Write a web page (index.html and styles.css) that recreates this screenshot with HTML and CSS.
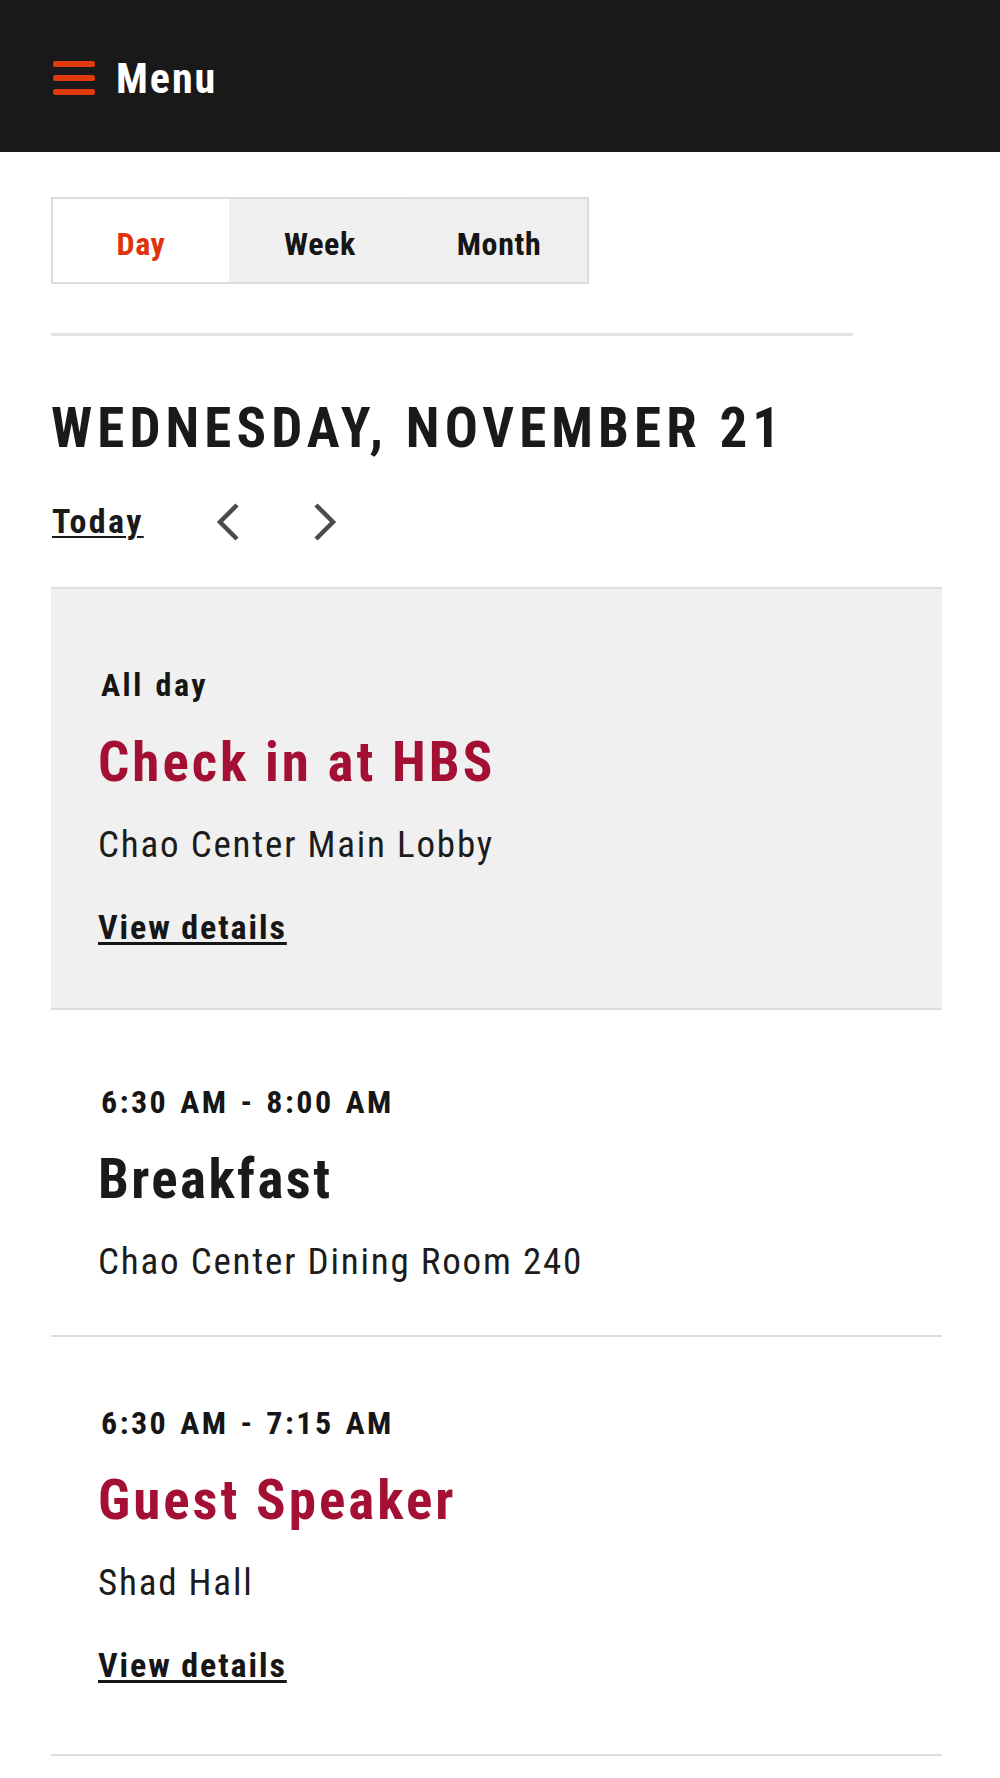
FILE: index.html
```html
<!DOCTYPE html>
<html lang="en">
<head>
<meta charset="utf-8">
<title>Calendar - Day</title>
<link rel="stylesheet" href="styles.css">
</head>
<body>
<header class="topbar">
  <a class="menu-btn" href="#">
    <svg class="menu-icon" width="42" height="34" viewBox="0 0 42 34" aria-hidden="true">
      <rect x="0" y="0" width="42" height="6" rx="2.5" fill="#e03a0e"/>
      <rect x="0" y="14" width="42" height="6" rx="2.5" fill="#e03a0e"/>
      <rect x="0" y="28" width="42" height="6" rx="2.5" fill="#e03a0e"/>
    </svg>
    <span class="menu-label">Menu</span>
  </a>
</header>

<main class="page">
  <nav class="view-tabs">
    <a class="tab tab-active" href="#">Day</a>
    <a class="tab" href="#">Week</a>
    <a class="tab tab-month" href="#">Month</a>
  </nav>

  <hr class="rule">

  <h1 class="day-title">WEDNESDAY, NOVEMBER 21</h1>

  <div class="day-nav">
    <a class="today-link" href="#">Today</a>
    <a class="arrow arrow-prev" href="#" aria-label="Previous day">
      <svg width="24" height="38" viewBox="0 0 24 38"><polyline points="21,2 4,19 21,36" fill="none" stroke="#4a4a4a" stroke-width="4.5"/></svg>
    </a>
    <a class="arrow arrow-next" href="#" aria-label="Next day">
      <svg width="24" height="38" viewBox="0 0 24 38"><polyline points="3,2 20,19 3,36" fill="none" stroke="#4a4a4a" stroke-width="4.5"/></svg>
    </a>
  </div>

  <ul class="events">
    <li class="event event-featured">
      <div class="event-time">All day</div>
      <h2 class="event-title title-link">Check in at HBS</h2>
      <div class="event-location">Chao Center Main Lobby</div>
      <a class="event-details" href="#">View details</a>
    </li>
    <li class="event">
      <div class="event-time">6:30 AM - 8:00 AM</div>
      <h2 class="event-title">Breakfast</h2>
      <div class="event-location">Chao Center Dining Room 240</div>
    </li>
    <li class="event event-last">
      <div class="event-time">6:30 AM - 7:15 AM</div>
      <h2 class="event-title title-link">Guest Speaker</h2>
      <div class="event-location">Shad Hall</div>
      <a class="event-details" href="#">View details</a>
    </li>
  </ul>
</main>
</body>
</html>
```

FILE: styles.css
```css
* {
  box-sizing: border-box;
}

body {
  margin: 0;
  background: #ffffff;
  color: #1a1a1a;
  font-family: "Roboto Condensed", "Liberation Sans", sans-serif;
}

a {
  color: inherit;
  text-decoration: none;
}

.topbar {
  height: 152px;
  background: #191919;
  display: flex;
  align-items: flex-start;
  padding: 58px 0 0 53px;
}

.menu-btn {
  display: flex;
  align-items: flex-start;
  color: #ffffff;
}

.menu-icon {
  display: block;
  margin-top: 3px;
}

.menu-label {
  margin-left: 21px;
  font-size: 42px;
  line-height: 42px;
  font-weight: 700;
  letter-spacing: 2px;
}

.page {
  margin-left: 51px;
  width: 891px;
}

.view-tabs {
  margin-top: 45px;
  width: 538px;
  height: 87px;
  border: 2px solid #dcdcdc;
  display: grid;
  grid-template-columns: 176px 182px 1fr;
}

.tab {
  display: flex;
  align-items: center;
  justify-content: center;
  padding-top: 6px;
  background: #f0f0f0;
  font-size: 32px;
  line-height: 32px;
  font-weight: 700;
  letter-spacing: 0.6px;
  color: #161616;
}

.tab-active {
  background: #ffffff;
  color: #e0330c;
}

.tab-month {
  background: #efefef;
}

.rule {
  margin: 49px 0 0 0;
  width: 802px;
  height: 3px;
  border: 0;
  background: #e3e3e3;
}

.day-title {
  margin: 65px 0 0 0;
  font-size: 55px;
  line-height: 55px;
  font-weight: 700;
  letter-spacing: 5.1px;
  color: #1a1a1a;
}

.day-nav {
  margin-top: 46px;
  height: 40px;
  display: flex;
  align-items: flex-start;
}

.today-link {
  margin: 2px 0 0 1px;
  font-size: 34px;
  line-height: 34px;
  font-weight: 700;
  letter-spacing: 2.4px;
  text-decoration: underline;
  text-decoration-thickness: 2px;
  text-underline-offset: 3px;
}

.arrow svg {
  display: block;
}

.arrow {
  margin-top: 1px;
}

.arrow-prev {
  margin-left: 72px;
}

.arrow-next {
  margin-left: 73px;
}

.events {
  list-style: none;
  margin: 45px 0 0 0;
  padding: 0;
}

.event {
  border-top: 2px solid #dedede;
  padding: 76px 0 55px 47px;
}

.event-featured {
  background: #f0f0f0;
  padding-top: 80px;
  padding-bottom: 53px;
}

.event-last {
  border-bottom: 2px solid #dedede;
  padding-top: 70px;
  padding-bottom: 61px;
}

.event-time {
  margin-left: 3px;
  font-size: 32px;
  line-height: 32px;
  font-weight: 700;
  letter-spacing: 2.5px;
  word-spacing: 2px;
  color: #161616;
}

.event-title {
  margin: 34px 0 0 0;
  font-size: 55px;
  line-height: 55px;
  font-weight: 700;
  letter-spacing: 2.4px;
  color: #1a1a1a;
}

.title-link {
  color: #a41034;
  letter-spacing: 3px;
}

.event-location {
  margin-top: 36px;
  font-size: 37px;
  line-height: 37px;
  font-weight: 400;
  letter-spacing: 1.8px;
  color: #1c1c1c;
}

.event-details {
  display: inline-block;
  margin-top: 47px;
  margin-bottom: 11px;
  font-size: 34px;
  line-height: 34px;
  font-weight: 700;
  letter-spacing: 1.9px;
  text-decoration: underline;
  text-decoration-thickness: 3px;
  text-underline-offset: 3px;
  color: #161616;
}
```
